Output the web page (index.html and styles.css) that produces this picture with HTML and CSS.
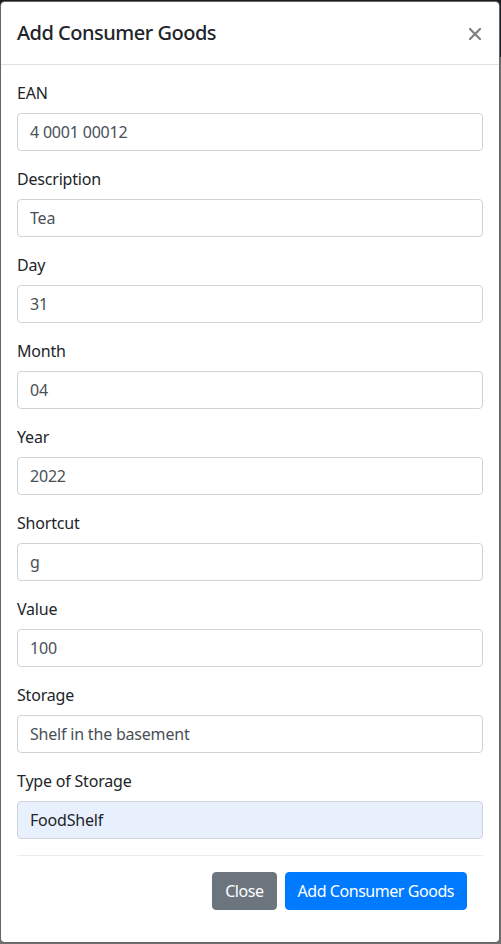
FILE: index.html
```html
<!DOCTYPE html>
<html lang="en">
<head>
<meta charset="utf-8">
<title>Add Consumer Goods</title>
<link rel="stylesheet" href="styles.css">
</head>
<body>
<div class="modal">
  <div class="modal-header">
    <h5 class="modal-title">Add Consumer Goods</h5>
    <button class="close" type="button" aria-label="Close">
      <svg width="12" height="12" viewBox="0 0 12 12"><path d="M1 1 L11 11 M11 1 L1 11" stroke="#808080" stroke-width="2.2" stroke-linecap="square"/></svg>
    </button>
  </div>
  <div class="modal-body">
    <div class="form-group"><label>EAN</label><input class="form-control" value="4 0001 00012"></div>
    <div class="form-group"><label>Description</label><input class="form-control" value="Tea"></div>
    <div class="form-group"><label>Day</label><input class="form-control" value="31"></div>
    <div class="form-group"><label>Month</label><input class="form-control" value="04"></div>
    <div class="form-group"><label>Year</label><input class="form-control" value="2022"></div>
    <div class="form-group"><label>Shortcut</label><input class="form-control" value="g"></div>
    <div class="form-group"><label>Value</label><input class="form-control" value="100"></div>
    <div class="form-group"><label>Storage</label><input class="form-control" value="Shelf in the basement"></div>
    <div class="form-group"><label>Type of Storage</label><input class="form-control autofill" value="FoodShelf"></div>
    <div class="modal-footer">
      <button class="btn btn-secondary" type="button">Close</button>
      <button class="btn btn-primary" type="button">Add Consumer Goods</button>
    </div>
  </div>
</div>
</body>
</html>
```
FILE: styles.css
```css
* { box-sizing: border-box; }
html, body { margin: 0; }
body {
  padding: 1px 1px 1px 0;
  background: linear-gradient(#1b1c1d 0, #1b1c1d 57px, #6f6f6f 57px);
  font-family: "Noto Sans", "Open Sans", sans-serif;
  font-size: 16px;
  line-height: 1.5;
  color: #212529;
  min-height: 944px;
}
.modal {
  width: 500px;
  background: #fff;
  border: 1px solid rgba(0,0,0,.6);
  border-radius: 4.8px;
  display: flex;
  flex-direction: column;
}
.modal-header {
  display: flex;
  align-items: flex-start;
  justify-content: space-between;
  padding: 16px;
  border-bottom: 1px solid #dee2e6;
}
.modal-title {
  margin: 0;
  font-size: 20px;
  font-weight: 500;
  line-height: 1.5;
  letter-spacing: -0.5px;
}
.close {
  background: transparent;
  border: 0;
  padding: 0;
  margin: 10px 2px 0 0;
  width: 12px;
  height: 12px;
  line-height: 0;
  cursor: pointer;
}
.modal-body { padding: 16px; }
.form-group { margin-bottom: 16px; }
label {
  display: block;
  margin-bottom: 8px;
  letter-spacing: -0.2px;
}
.form-control {
  display: block;
  width: 100%;
  height: 38px;
  padding: 6px 12px;
  font: inherit;
  letter-spacing: -0.2px;
  color: #495057;
  background: #fff;
  border: 1px solid #ced4da;
  border-radius: 4px;
}
.form-control.autofill {
  background: #e8f0fe;
  color: #212529;
}
.modal-footer {
  display: flex;
  justify-content: flex-end;
  align-items: center;
  padding: 12px;
  border-top: 1px solid #e9ecef;
}
.btn {
  margin: 4px;
  height: 38px;
  padding: 6px 12px;
  font: inherit;
  letter-spacing: -0.45px;
  color: #fff;
  border: 1px solid transparent;
  border-radius: 4px;
}
.btn-secondary { background: #6c757d; border-color: #6c757d; }
.btn-primary { background: #007bff; border-color: #007bff; }
```
